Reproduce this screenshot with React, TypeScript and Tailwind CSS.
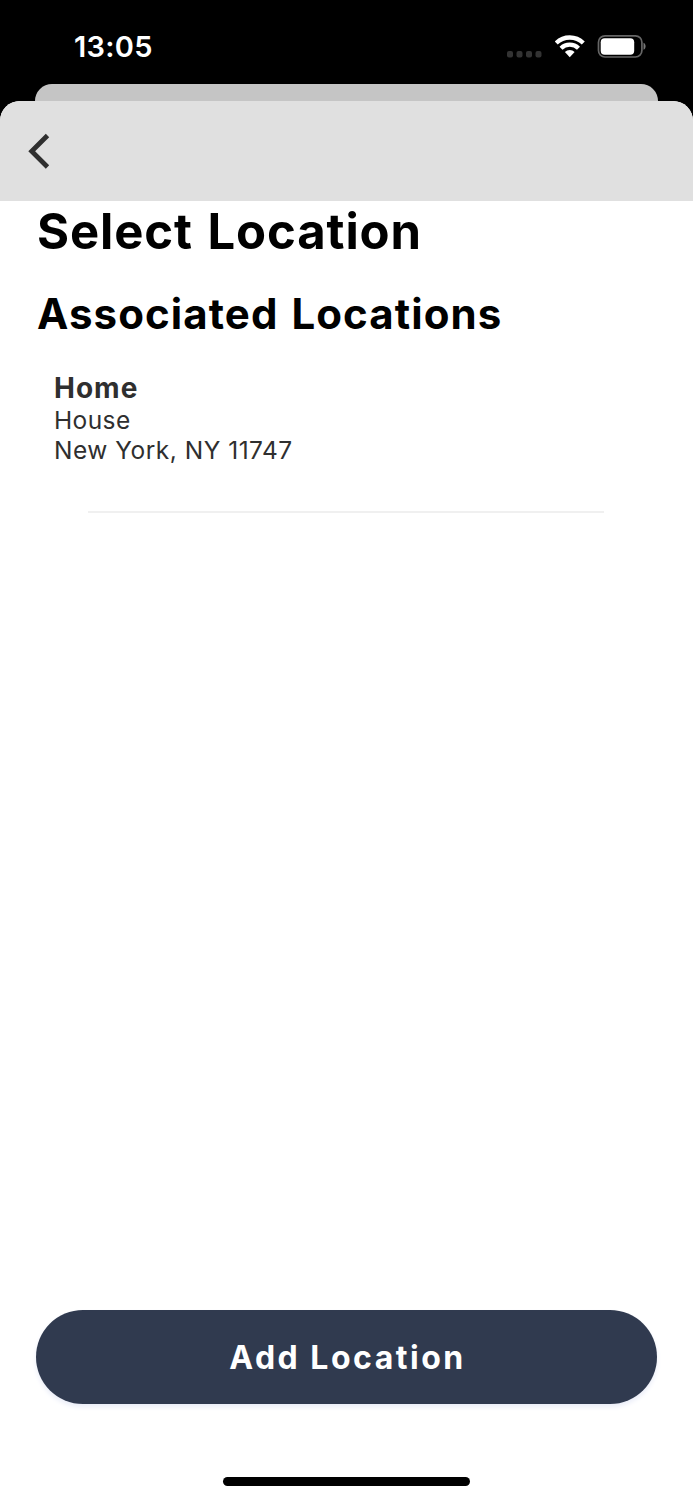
import React from "react";

const locations = [
  { name: "Home", type: "House", address: "New York, NY 11747" },
];

function StatusBar() {
  return (
    <div className="flex h-[84px] shrink-0 items-start justify-between pl-[74px] pr-[46px] pt-[34px] text-white">
      <span className="text-[29px] font-semibold leading-[26px] tracking-[0.3px]">13:05</span>
      <div className="flex h-[24px] items-center">
        {/* no signal dots */}
        <svg width="35" height="24" viewBox="0 0 35 24" fill="#333">
          <rect x="0" y="17" width="6" height="6.500" rx="2" />
          <rect x="9.500" y="17" width="6" height="6.500" rx="2" />
          <rect x="19" y="17" width="6" height="6.500" rx="2" />
          <rect x="28.500" y="17" width="6" height="6.500" rx="2" />
        </svg>
        <svg className="ml-[13px]" width="30" height="24" viewBox="0 0 30 24" fill="none" stroke="white" strokeWidth="4.300">
          <path d="M1.200 9a19.500 19.500 0 0 1 27.100 0" />
          <path d="M6 14.200a12.500 12.500 0 0 1 17.500 0" />
          <path d="M9.900 18a7 7 0 0 1 9.700 0L14.750 23.200z" fill="white" stroke="none" />
        </svg>
        <svg className="ml-[12px]" width="50" height="24" viewBox="0 0 50 24" fill="none">
          <rect x="1.500" y="1.800" width="43.400" height="21.200" rx="6.500" stroke="#666" strokeWidth="1.700" />
          <rect x="3.700" y="4.200" width="33.500" height="16.500" rx="4" fill="white" />
          <path d="M46.500 8.800v7c2.800-1 2.800-6 0-7z" fill="#777" />
        </svg>
      </div>
    </div>
  );
}

function App() {
  return (
    <div className="flex h-[1500px] w-[693px] flex-col overflow-hidden bg-black font-['Inter',sans-serif]">
      <StatusBar />
      <div className="mx-[35px] h-[17px] shrink-0 rounded-t-[18px] bg-[#c5c5c5]" />
      <main className="flex grow flex-col overflow-hidden rounded-t-[20px] bg-white">
        <header className="flex h-[100px] shrink-0 items-center bg-[#e0e0e0] pl-[28px]">
          <svg width="22" height="36" viewBox="0 0 22 36" fill="none" stroke="#2f2f2f" strokeWidth="4.800">
            <path d="M19.500 2.500 3.700 18.300l15.800 15.700" />
          </svg>
        </header>
        <h1 className="pl-[37px] text-[49px] font-bold leading-[61px] tracking-[0.9px] [word-spacing:2px]">
          Select Location
        </h1>
        <h2 className="mt-[25px] pl-[37px] text-[42px] font-bold leading-[54px] tracking-[1.08px] [word-spacing:2px]">
          Associated Locations
        </h2>
        {locations.map((l) => (
          <div key={l.name} className="mt-[31px] pl-[54px] text-[#2f2f2f]">
            <p className="text-[28px] font-bold leading-[33px] tracking-[1px]">{l.name}</p>
            <p className="text-[24.5px] leading-[30px] tracking-[0.4px]">{l.type}</p>
            <p className="text-[24.5px] leading-[30px] tracking-[0.5px]">{l.address}</p>
          </div>
        ))}
        <div className="ml-[88px] mt-[46px] h-[2px] w-[516px] bg-[#f0f0f0]" />
        <div className="grow" />
        <button className="mx-[36px] mb-[73px] h-[94px] shrink-0 rounded-full bg-[#303a4f] pl-[2px] pt-[2px] text-[32px] font-bold tracking-[2.5px] text-white shadow-[0_3px_5px_#eaedf8]">
          Add Location
        </button>
        <div className="mx-auto mb-[14px] h-[9px] w-[247px] shrink-0 rounded-full bg-black" />
      </main>
    </div>
  );
}

export default App;
